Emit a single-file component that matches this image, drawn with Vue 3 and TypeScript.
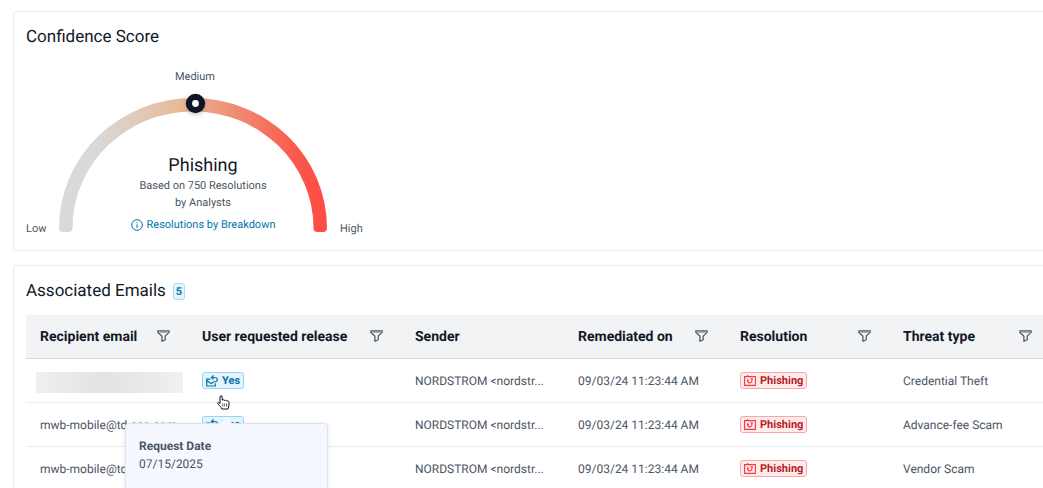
<script setup lang="ts">
interface Column {
  key: string
  label: string
  filter: boolean
}
interface EmailRow {
  recipient: string | null
  sender: string
  remediated: string
  resolution: string
  threat: string
}

const columns: Column[] = [
  { key: 'recipient', label: 'Recipient email', filter: true },
  { key: 'release', label: 'User requested release', filter: true },
  { key: 'sender', label: 'Sender', filter: false },
  { key: 'remediated', label: 'Remediated on', filter: true },
  { key: 'resolution', label: 'Resolution', filter: true },
  { key: 'threat', label: 'Threat type', filter: true },
]

const sender = 'NORDSTROM <nordstr...'
const remediated = '09/03/24 11:23:44 AM'
const resolution = 'Phishing'
const rows: EmailRow[] = [
  { recipient: null, sender, remediated, resolution, threat: 'Credential Theft' },
  { recipient: 'mwb-mobile@td-eco.com', sender, remediated, resolution, threat: 'Advance-fee Scam' },
  { recipient: 'mwb-mobile@td-eco.com', sender, remediated, resolution, threat: 'Vendor Scam' },
]
</script>

<template>
  <main class="page">
    <section class="card score">
      <h2 class="title">Confidence Score</h2>
      <div class="gauge">
        <span class="level medium">Medium</span>
        <span class="level low">Low</span>
        <svg class="arc" viewBox="0 0 268 142" aria-hidden="true">
          <defs>
            <linearGradient id="heat" x1="0" x2="1" y1="0" y2="0">
              <stop offset="0.14" stop-color="#d9d9d9" />
              <stop offset="0.46" stop-color="#e8b896" />
              <stop offset="0.9" stop-color="#fb564b" />
              <stop offset="1" stop-color="#ff4b45" />
            </linearGradient>
            <filter id="knob-shadow" x="-50%" y="-50%" width="200%" height="200%">
              <feDropShadow dx="0" dy="2" stdDeviation="2" flood-color="#4b5577" flood-opacity="0.3" />
            </filter>
          </defs>
          <path
            fill="url(#heat)"
            d="M4 142Q0 142 0 138A134 130 0 0 1 268 138Q268 142 264 142H258.500Q254.500 142 254.500 138A120.500 116.500 0 0 0 13.500 138Q13.500 142 9.500 142Z"
          />
          <circle cx="136.500" cy="13.500" r="9.700" fill="#111827" filter="url(#knob-shadow)" />
          <circle cx="136.500" cy="13.500" r="3.400" fill="#fff" />
        </svg>
        <span class="level high">High</span>
        <div class="verdict">
          <strong class="verdict-name">Phishing</strong>
          <span class="verdict-note">Based on 750 Resolutions<br />by Analysts</span>
          <a class="breakdown" href="#breakdown">
            <svg width="12" height="12" viewBox="0 0 12 12" fill="none" stroke="currentColor" aria-hidden="true">
              <circle cx="6" cy="6" r="5.300" />
              <path d="M6 5.300V8.800M6 3.200V4.300" />
            </svg>
            Resolutions by Breakdown
          </a>
        </div>
      </div>
    </section>

    <section class="card emails">
      <header class="head">
        <h2 class="title">Associated Emails</h2>
        <span class="count">5</span>
      </header>
      <table class="table">
        <colgroup>
          <col v-for="c in columns" :key="c.key" :class="'col-' + c.key" />
        </colgroup>
        <thead>
          <tr>
            <th v-for="c in columns" :key="c.key" scope="col">
              <div class="th">
                {{ c.label }}
                <button v-if="c.filter" class="filter" type="button" :aria-label="'Filter ' + c.label">
                  <svg width="13" height="12" viewBox="0 0 13 12" fill="none" stroke="currentColor" stroke-width="1.200" stroke-linejoin="round" aria-hidden="true">
                    <path d="M0.800 0.800H12.200V2.200L8.200 6.200V9.700L4.900 11.300V6.200L0.800 2.200Z" />
                    <path d="M2.600 2.300H10.400" stroke-width="0.600" />
                  </svg>
                </button>
              </div>
            </th>
          </tr>
        </thead>
        <tbody>
          <tr v-for="(row, i) in rows" :key="i">
            <td>
              <span v-if="row.recipient">{{ row.recipient }}</span>
              <div v-else class="redacted"></div>
            </td>
            <td>
              <div v-if="i < 2" class="release">
                <span class="tag blue">
                  <svg width="12" height="12" viewBox="0 0 12 12" fill="none" stroke="currentColor" stroke-width="1.200" aria-hidden="true">
                    <path d="M4.500 4.200H0.700V11H9.300V8.200M0.700 5.600L5 8.600L8.600 6.400M5.500 2.500H8.500C12 2.500 12.200 6.200 9.200 6.800M7.600 0.400L5.500 2.500L7.600 4.600" />
                  </svg>
                  Yes
                </span>
                <template v-if="i === 0">
                  <svg class="cursor" width="13" height="15" viewBox="0 0 13 15" aria-hidden="true">
                    <path
                      d="M3 8.500V2C3 0.300 5.200 0.300 5.200 2V5.200C5.800 4.500 7.200 4.600 7.500 5.500C8.200 4.900 9.400 5.200 9.700 6C10.600 5.500 12 6 12 7.300V10C12 11.500 11 12.500 11 14H4.800C4.500 12.200 2.500 10.700 0.900 8.900C0 7.700 1.600 6.700 3 8.500Z"
                      fill="#fff" stroke="#111" stroke-width="1" stroke-linejoin="round"
                    />
                    <path d="M5.800 8.500V11.500M7.700 8.500V11.500M9.600 8.500V11.500" stroke="#333" stroke-width="0.800" />
                  </svg>
                  <div class="tooltip" role="tooltip">
                    <svg class="pointer" width="14" height="8" viewBox="0 0 14 8" aria-hidden="true">
                      <path d="M0 7L7 0L14 7V8H0Z" fill="#f5f8ff" />
                    </svg>
                    <strong>Request Date</strong>
                    <span>07/15/2025</span>
                  </div>
                </template>
              </div>
            </td>
            <td>{{ row.sender }}</td>
            <td>{{ row.remediated }}</td>
            <td>
              <span class="tag red">
                <svg width="12" height="11" viewBox="0 0 12 11" fill="none" stroke="#f5393c" stroke-width="1.100" aria-hidden="true">
                  <path d="M3.500 0V1.500M0.600 1.600H11.400V10.400H0.600ZM3.500 4.300V5.600C3.500 8.600 7.900 8.600 7.900 5.600V3.800M3.500 5.800L5 5.200M6.500 3.800H9" />
                </svg>
                {{ row.resolution }}
              </span>
            </td>
            <td>{{ row.threat }}</td>
          </tr>
        </tbody>
      </table>
    </section>
  </main>
</template>

<style>
html {
  overflow: hidden;
}
body {
  margin: 0;
  background: #fff;
}
</style>

<style scoped>
.page {
  display: flex;
  flex-direction: column;
  gap: 14px;
  padding: 11px 0 0 13px;
  font-family: Roboto, "Liberation Sans", sans-serif;
  font-size: 12px;
  line-height: 16px;
  color: #4b5563;
  text-rendering: geometricPrecision;
}
.card {
  border: 1px solid #ebecee;
  border-right: 0;
  border-radius: 4px 0 0 4px;
  padding-left: 12px;
}
.title {
  margin: 0;
  font-size: 17px;
  line-height: 22px;
  font-weight: 400;
  color: #111827;
}
.score {
  padding-top: 14px;
  padding-bottom: 18px;
}
.gauge {
  display: grid;
  grid-template-columns: 33px 268px auto;
  justify-content: start;
  align-items: end;
  margin-top: 21px;
}
.level {
  font-size: 11px;
  line-height: 16px;
}
.medium {
  grid-area: 1 / 2;
  justify-self: center;
  padding-left: 4px;
  margin-bottom: 5px;
}
.low {
  grid-area: 2 / 1;
  margin-bottom: -5px;
}
.high {
  grid-area: 2 / 3;
  padding-left: 13px;
  margin-bottom: -5px;
}
.arc {
  grid-area: 2 / 2;
  display: block;
  width: 100%;
}
.verdict {
  grid-area: 2 / 2;
  display: flex;
  flex-direction: column;
  align-items: center;
  padding-left: 20px;
  margin-bottom: -1px;
  z-index: 1;
}
.verdict-name {
  font-size: 18px;
  line-height: 22px;
  font-weight: 400;
  color: #111827;
}
.verdict-note {
  font-size: 11px;
  line-height: 17px;
  text-align: center;
}
.breakdown {
  display: flex;
  align-items: center;
  gap: 4px;
  margin-top: 5px;
  font-size: 11px;
  line-height: 17px;
  color: #0073b1;
  text-decoration: none;
}
.emails {
  padding-top: 14px;
  padding-bottom: 24px;
}
.head {
  display: flex;
  align-items: center;
  gap: 7px;
  margin-bottom: 13px;
}
.count {
  border: 1px solid #a5defa;
  border-radius: 3px;
  padding: 0 2px;
  font-size: 11px;
  line-height: 15px;
  font-weight: 700;
  color: #0a78ad;
  background: #e3f4fe;
}
.table {
  width: 100%;
  table-layout: fixed;
  border-collapse: separate;
  border-spacing: 0;
}
.col-recipient,
.col-remediated {
  width: 162px;
}
.col-release {
  width: 213px;
}
.col-sender,
.col-resolution {
  width: 163px;
}
th,
td {
  box-sizing: border-box;
  height: 44px;
  padding: 0 0 0 14px;
  border-bottom: 1px solid #ebecee;
  text-align: left;
  white-space: nowrap;
}
th {
  border-bottom-color: #d3d6dc;
  background: #f2f3f5;
  font-size: 14px;
  font-weight: 700;
  color: #111827;
}
.th {
  display: flex;
  align-items: center;
  justify-content: space-between;
  padding-right: 18px;
}
th:last-child .th {
  padding-right: 11px;
}
.filter {
  display: flex;
  margin: 0;
  padding: 0 0 2px;
  border: 0;
  background: none;
  color: #4b5563;
}
.redacted {
  height: 21px;
  margin: 3px 5px 0 -4px;
  background: linear-gradient(90deg, #eeeff0, #e2e3e5 45%, #e8e9ea 75%, #f0f1f2);
}
.release {
  position: relative;
  display: flex;
}
.tag {
  display: inline-flex;
  align-items: center;
  gap: 4px;
  padding: 0 3px;
  border: 1px solid;
  border-radius: 3px;
  font-size: 11px;
  line-height: 15px;
  font-weight: 700;
  vertical-align: middle;
}
.blue {
  border-color: #8fd6fb;
  background: #e3f4fe;
  color: #0a70a6;
}
.red {
  border-color: #fca5a5;
  background: #feecec;
  color: #b91c1c;
}
.cursor {
  position: absolute;
  z-index: 3;
  left: 15px;
  top: 23px;
}
.tooltip {
  position: absolute;
  z-index: 2;
  left: -77px;
  top: 51px;
  box-sizing: border-box;
  width: 203px;
  height: 78px;
  padding: 13px;
  display: flex;
  flex-direction: column;
  border: 1px solid #dfe3ee;
  border-radius: 4px;
  background: #f5f8ff;
  box-shadow: 0 1px 4px rgba(60, 70, 110, 0.14);
  font-size: 12px;
  line-height: 18px;
}
.pointer {
  position: absolute;
  left: 93px;
  top: -7px;
}
</style>
